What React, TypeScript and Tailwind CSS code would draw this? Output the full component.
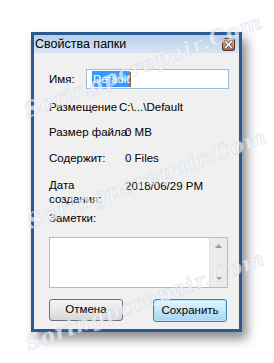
import React from "react";

const font = { fontFamily: '"Liberation Sans", Arial, sans-serif' };

const Watermark: React.FC<{ className: string }> = ({ className }) => (
    <div
        className={`pointer-events-none absolute text-[21px] font-bold italic tracking-[1px] text-[#f3f6fb] opacity-70 whitespace-nowrap ${className}`}
        style={{ fontFamily: '"DejaVu Serif", serif', WebkitTextStroke: "0.5px #c9d5e6" }}
    >
        Soringpcrepair.Com
    </div>
);

const CloseButton = () => (
    <div className="w-[13px] h-[13px] rounded-[2px] border border-[#5e2f22] bg-gradient-to-b from-[#e7b9a2] to-[#b3684b] flex items-center justify-center">
        <svg width="9" height="9" viewBox="0 0 9 9">
            <path d="M1.5 1.5 L7.5 7.5 M7.5 1.5 L1.5 7.5" stroke="#4a4a4a" strokeWidth="3" strokeLinecap="square" />
            <path d="M1.5 1.5 L7.5 7.5 M7.5 1.5 L1.5 7.5" stroke="#ffffff" strokeWidth="1.6" strokeLinecap="square" />
        </svg>
    </div>
);

const Row: React.FC<{ label: string; value: string; gap: string; mt: string }> = ({ label, value, gap, mt }) => (
    <div className={`flex text-[11.5px] leading-[14px] text-black whitespace-nowrap ${mt}`}>
        <span className={`shrink-0 ${gap}`}>{label}</span>
        <span>{value}</span>
    </div>
);

export default function App() {
    return (
        <div className="relative w-[274px] h-[363px] bg-white overflow-hidden pt-[32px] pl-[31px]" style={font}>
            <div className="w-[211px] h-[300px] border-[3px] border-[#2a5a8f] bg-[#f0f0f0] shadow-[5px_7px_10px_rgba(0,0,0,0.45)] flex flex-col">
                <div className="h-[18px] bg-gradient-to-b from-[#b7cfea] to-[#d7e5f4] flex items-center justify-between pl-[1px] pr-[4px]">
                    <span className="text-[12.5px] leading-[15px] text-black">Свойства папки</span>
                    <CloseButton />
                </div>

                <div className="flex flex-col pl-[15px] pr-[10px]">
                    <div className="flex items-center mt-[16px]">
                        <span className="w-[37px] shrink-0 text-[11.5px] leading-[14px]">Имя:</span>
                        <div className="w-[143px] h-[20px] border border-[#9dbbe0] bg-white flex items-center pl-[5px]">
                            <span className="bg-[#3399ff] text-white text-[11.5px] leading-[16px] px-[1px]">Default</span>
                            <span className="w-[1px] h-[15px] bg-[#a8581c]" />
                        </div>
                    </div>

                    <Row label="Размещение" value="C:\...\Default" gap="w-[70px]" mt="mt-[11px]" />
                    <Row label="Размер файла:" value="0 MB" gap="w-[76px]" mt="mt-[11px]" />
                    <Row label="Содержит:" value="0 Files" gap="w-[76px]" mt="mt-[12px]" />

                    <div className="flex text-[11.5px] leading-[14px] mt-[13px] whitespace-nowrap">
                        <span className="w-[76px] shrink-0">
                            Дата
                            <br />
                            создания:
                        </span>
                        <span className="mt-[1px]">2018/06/29 PM</span>
                    </div>

                    <div className="text-[11.5px] leading-[14px] mt-[5px]">Заметки:</div>

                    <div className="mt-[12px] w-[179px] h-[51px] border border-[#b5b9c2] bg-white flex justify-end">
                        <div className="w-[18px] h-full bg-[#ececec] border-l border-[#e2e2e2] flex flex-col items-center justify-between py-[6px]">
                            <svg width="7" height="4" viewBox="0 0 7 4">
                                <path d="M0 4 L3.5 0 L7 4 Z" fill="#9a9a9a" />
                            </svg>
                            <svg width="7" height="4" viewBox="0 0 7 4">
                                <path d="M0 0 L3.5 4 L7 0 Z" fill="#9a9a9a" />
                            </svg>
                        </div>
                    </div>

                    <div className="flex justify-between mt-[11px] w-[178px]">
                        <button className="w-[74px] h-[22px] rounded-[3px] border border-[#707070] bg-gradient-to-b from-[#f3f3f3] via-[#e8e8e8] to-[#d6d6d6] text-[11.5px] text-black">
                            Отмена
                        </button>
                        <button className="w-[74px] h-[23px] rounded-[3px] border border-[#3c7fb1] bg-gradient-to-b from-[#e8f6fd] via-[#c4e5f6] to-[#a3d6f3] text-[11.5px] text-black shadow-[inset_0_0_0_1px_#b9e3fa]">
                            Сохранить
                        </button>
                    </div>
                </div>
            </div>

            <Watermark className="left-[16px] top-[50px] -rotate-[21deg]" />
            <Watermark className="left-[20px] top-[163px] -rotate-[20deg]" />
            <Watermark className="left-[18px] top-[285px] -rotate-[20deg]" />
        </div>
    );
}
